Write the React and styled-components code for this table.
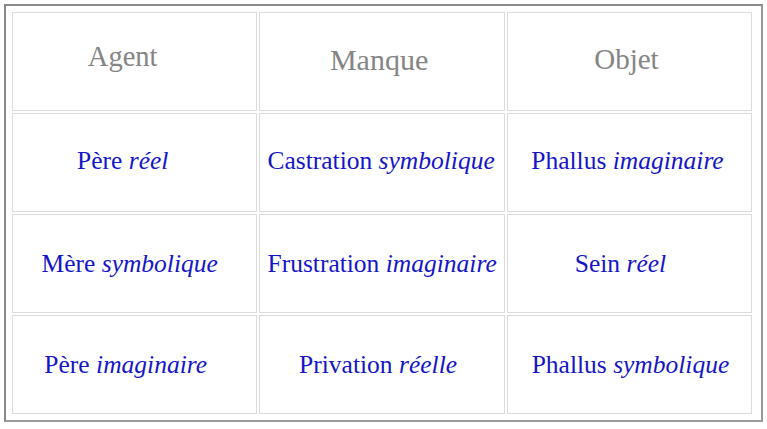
import React from "react";
import styled, { createGlobalStyle } from "styled-components";

const Global = createGlobalStyle`
  html, body { margin: 0; padding: 0; background: #fff; }
  body { font-family: "Liberation Serif", "Times New Roman", serif; }
`;

const Frame = styled.div`
  margin: 4px;
  width: 759px;
  box-sizing: border-box;
  border: 2px solid #9a9a9a;
  border-top-color: #8a8a8a;
  border-left-color: #8a8a8a;
  padding: 6px;
`;

const Grid = styled.div`
  display: grid;
  grid-template-columns: repeat(3, 245.4px);
  grid-auto-rows: 99px;
  gap: 2px;
`;

const Cell = styled.div`
  box-sizing: border-box;
  border: 1px solid #dcdcdc;
  display: flex;
  align-items: center;
  justify-content: center;
  white-space: nowrap;
  padding-left: ${(p) => (p.$shift > 0 ? p.$shift * 2 : 0)}px;
  padding-right: ${(p) => (p.$shift < 0 ? -p.$shift * 2 : 0)}px;
  padding-top: ${(p) => (p.$dy < 0 ? 0 : (p.$dy || 0) * 2)}px;
  padding-bottom: ${(p) => (p.$dy < 0 ? -p.$dy * 2 : 0)}px;
`;

const Head = styled.span`
  color: #858585;
  font-size: ${(p) => p.$size || 29}px;
`;

const Entry = styled.span`
  color: #1515c8;
  font-size: 25.5px;
`;

const Qual = styled.em`
  font-style: italic;
`;

const heads = [
  { t: "Agent", shift: -12, dy: -5, size: 28.5 },
  { t: "Manque", shift: -3, dy: -2, size: 30 },
  { t: "Objet", shift: -3, dy: -2, size: 29 },
];

const rows = [
  [
    { a: "Père", b: "réel", shift: -12, dy: -2 },
    { a: "Castration", b: "symbolique", shift: -1, dy: -2 },
    { a: "Phallus", b: "imaginaire", shift: -2, dy: -2 },
  ],
  [
    { a: "Mère", b: "symbolique", shift: -5, dy: 0 },
    { a: "Frustration", b: "imaginaire", shift: 0, dy: 0 },
    { a: "Sein", b: "réel", shift: -9, dy: 0 },
  ],
  [
    { a: "Père", b: "imaginaire", shift: -9, dy: 0 },
    { a: "Privation", b: "réelle", shift: -4, dy: 0 },
    { a: "Phallus", b: "symbolique", shift: 1, dy: 0 },
  ],
];

export default function App() {
  return (
    <>
      <Global />
      <Frame>
        <Grid>
          {heads.map((h) => (
            <Cell key={h.t} $shift={h.shift} $dy={h.dy}>
              <Head $size={h.size}>{h.t}</Head>
            </Cell>
          ))}
          {rows.flat().map((c, i) => (
            <Cell key={i} $shift={c.shift} $dy={c.dy}>
              <Entry>
                {c.a} <Qual>{c.b}</Qual>
              </Entry>
            </Cell>
          ))}
        </Grid>
      </Frame>
    </>
  );
}
